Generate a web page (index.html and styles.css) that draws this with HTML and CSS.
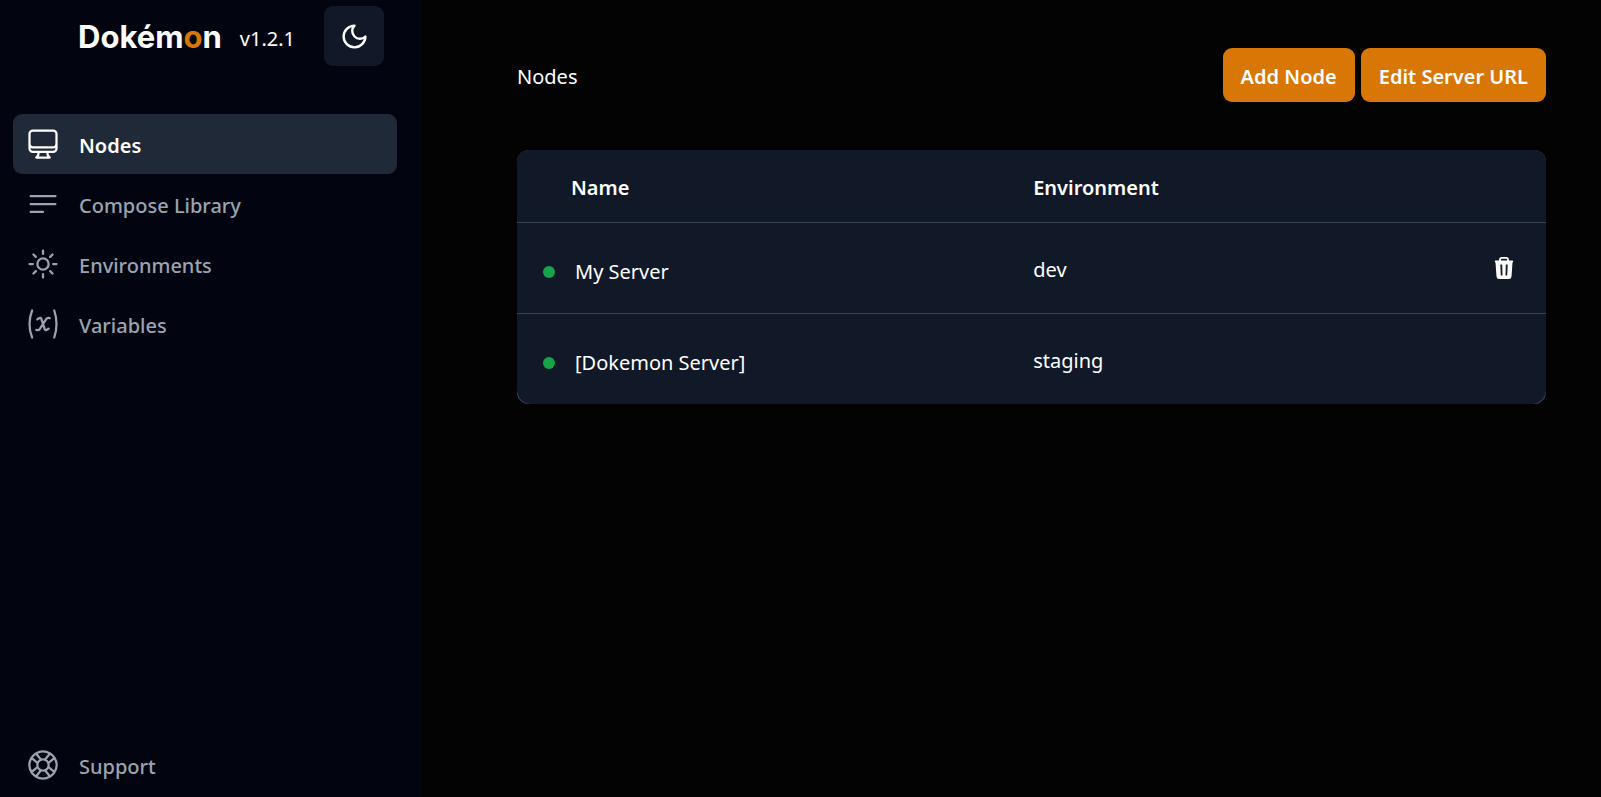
FILE: index.html
```html
<!DOCTYPE html>
<html lang="en">
<head>
<meta charset="utf-8">
<title>Dokémon – Nodes</title>
<link rel="stylesheet" href="styles.css">
</head>
<body>
<div class="app">
  <aside class="sidebar">
    <header class="brand">
      <span class="logo">Dokém<span class="logo-accent">o</span>n</span>
      <span class="version">v1.2.1</span>
      <button class="theme-toggle" type="button" aria-label="Toggle theme">
        <svg class="moon" viewBox="0 0 24 24"><path d="M12 3a6 6 0 0 0 9 9 9 9 0 1 1-9-9Z"/></svg>
      </button>
    </header>
    <nav class="nav">
      <a class="nav-link active" href="#nodes">
        <svg class="icon" viewBox="0 0 24 24"><path d="M9 17.25v1.007a3 3 0 0 1-.879 2.122L7.5 21h9l-.621-.621A3 3 0 0 1 15 18.257V17.25m6-12V15a2.25 2.25 0 0 1-2.25 2.25H5.25A2.25 2.25 0 0 1 3 15V5.25m18 0A2.25 2.25 0 0 0 18.75 3H5.25A2.25 2.25 0 0 0 3 5.25m18 0V12a2.25 2.25 0 0 1-2.25 2.25H5.25A2.25 2.25 0 0 1 3 12V5.25"/></svg>
        <span class="label">Nodes</span>
      </a>
      <a class="nav-link" href="#library">
        <svg class="icon" viewBox="0 0 24 24"><path d="M3.75 6.75h16.5M3.75 12h16.5m-16.5 5.25H12"/></svg>
        <span class="label">Compose Library</span>
      </a>
      <a class="nav-link" href="#environments">
        <svg class="icon" viewBox="0 0 24 24"><path d="M12 3v2.25m6.364.386-1.591 1.591M21 12h-2.25m-.386 6.364-1.591-1.591M12 18.75V21m-4.773-4.227-1.591 1.591M5.25 12H3m4.227-4.773L5.636 5.636M15.75 12a3.75 3.75 0 1 1-7.5 0 3.75 3.75 0 0 1 7.5 0Z"/></svg>
        <span class="label">Environments</span>
      </a>
      <a class="nav-link" href="#variables">
        <svg class="icon" viewBox="0 0 24 24"><path d="M4.745 3A23.933 23.933 0 0 0 3 12c0 3.183.62 6.22 1.745 9M19.5 3c.967 2.78 1.5 5.817 1.5 9s-.533 6.22-1.5 9M8.25 8.885l1.444-.89a.75.75 0 0 1 1.105.402l2.402 7.206a.75.75 0 0 0 1.104.401l1.445-.889m-8.25.75.213.09a1.687 1.687 0 0 0 2.062-.617l4.45-6.676a1.688 1.688 0 0 1 2.062-.618l.213.09"/></svg>
        <span class="label">Variables</span>
      </a>
      <a class="nav-link support" href="#support">
        <svg class="icon" viewBox="0 0 24 24"><path d="M16.712 4.33a9.027 9.027 0 0 1 1.652 1.306c.51.51.944 1.064 1.306 1.652M16.712 4.33l-3.448 4.138m3.448-4.138a9.014 9.014 0 0 0-9.424 0M19.67 7.288l-4.138 3.448m4.138-3.448a9.014 9.014 0 0 1 0 9.424m-4.138-5.976a3.736 3.736 0 0 0-.88-1.388 3.737 3.737 0 0 0-1.388-.88m2.268 2.268a3.765 3.765 0 0 1 0 2.528m-2.268-4.796a3.765 3.765 0 0 0-2.528 0m4.796 4.796c-.181.506-.475.982-.88 1.388a3.736 3.736 0 0 1-1.388.88m2.268-2.268 4.138 3.448m0 0a9.027 9.027 0 0 1-1.306 1.652c-.51.51-1.064.944-1.652 1.306m0 0-3.448-4.138m3.448 4.138a9.014 9.014 0 0 1-9.424 0m5.976-4.138a3.765 3.765 0 0 1-2.528 0m0 0a3.736 3.736 0 0 1-1.388-.88 3.737 3.737 0 0 1-.88-1.388m2.268 2.268L7.288 19.67m0 0a9.024 9.024 0 0 1-1.652-1.306 9.027 9.027 0 0 1-1.306-1.652m0 0 4.138-3.448M4.33 16.712a9.014 9.014 0 0 1 0-9.424m4.138 5.976a3.765 3.765 0 0 1 0-2.528m0 0c.181-.506.475-.982.88-1.388a3.736 3.736 0 0 1 1.388-.88m-2.268 2.268L4.33 7.288m6.406 1.18L7.288 4.33m0 0a9.024 9.024 0 0 0-1.652 1.306A9.025 9.025 0 0 0 4.33 7.288"/></svg>
        <span class="label">Support</span>
      </a>
    </nav>
  </aside>
  <main class="main">
    <div class="page-head">
      <h1 class="title">Nodes</h1>
      <div class="actions">
        <button class="btn" type="button">Add Node</button>
        <button class="btn" type="button">Edit Server URL</button>
      </div>
    </div>
    <div class="card">
      <table class="table">
        <colgroup><col class="col-name"><col class="col-env"><col></colgroup>
        <thead>
          <tr><th class="name-head" scope="col">Name</th><th scope="col">Environment</th><th></th></tr>
        </thead>
        <tbody>
          <tr>
            <td class="name"><span class="name-inner"><span class="dot"></span>My Server</span></td>
            <td>dev</td>
            <td class="row-actions">
              <button class="delete" type="button" aria-label="Delete My Server">
                <svg class="trash" viewBox="0 0 24 24"><path fill-rule="evenodd" d="M3.500 4.500H7V4q0-3 3-3h4q3 0 3 3v.5h3.500q.7 0 .7.800T20.500 6.500L19.500 20.500q-.2 2.500-2.500 2.500H7q-2.300 0-2.500-2.500L3.500 6.500q-.7-.2-.7-1.200t.7-.8ZM8.800 4.500h6.400V4q0-1.200-1.200-1.200h-4Q8.800 2.800 8.800 4ZM8.300 8.500l.5 11h1.700l-.3-11ZM15.700 8.500l-.5 11h-1.700l.3-11Z"/></svg>
              </button>
            </td>
          </tr>
          <tr>
            <td class="name"><span class="name-inner"><span class="dot"></span>[Dokemon Server]</span></td>
            <td>staging</td>
            <td></td>
          </tr>
        </tbody>
      </table>
    </div>
  </main>
</div>
</body>
</html>
```
FILE: styles.css
```css
* { box-sizing: border-box; }
body {
  margin: 0;
  background: #030303;
  color: #fff;
  font: 20px/30px "Noto Sans", "Open Sans", sans-serif;
}
button { font: inherit; color: inherit; border: 0; cursor: pointer; }
svg { display: block; }
.app { display: flex; min-height: 100vh; }
.sidebar {
  display: flex;
  flex-direction: column;
  flex: 0 0 421px;
  padding: 6px 24px 2px 13px;
  background: #02050f;
}
.brand { display: flex; align-items: center; height: 60px; padding: 0 13px 0 65px; }
.logo { padding-top: 2px; font: 700 31px/36px Inter, sans-serif; }
.logo-accent { color: #d97706; }
.version { margin-left: 18px; padding-top: 6px; }
.theme-toggle {
  display: grid;
  place-items: center;
  width: 60px;
  height: 60px;
  margin-left: auto;
  border-radius: 9px;
  background: #111827;
}
.moon { width: 29px; height: 29px; fill: none; stroke: #fff; stroke-width: 2; stroke-linecap: round; stroke-linejoin: round; }
.nav { display: flex; flex: 1; flex-direction: column; margin-top: 48px; }
.nav-link {
  display: flex;
  align-items: center;
  gap: 18px;
  height: 60px;
  padding: 0 12px;
  border-radius: 9px;
  color: #9ca3af;
  font-weight: 500;
  text-decoration: none;
}
.label { padding-top: 4px; }
.nav-link.active { background: #1f2937; color: #fff; font-weight: 600; }
.support { margin-top: auto; }
.icon { width: 36px; height: 36px; fill: none; stroke: currentColor; stroke-width: 1.5; stroke-linecap: round; stroke-linejoin: round; }
.main { flex: 1; padding: 48px 55px 48px 96px; }
.page-head { display: flex; align-items: center; justify-content: space-between; }
.title { margin: 0; padding-top: 4px; font-size: 20px; font-weight: 400; }
.actions { display: flex; gap: 6px; }
.btn { height: 54px; padding: 4px 18px 0; border-radius: 9px; background: #d97706; font-weight: 600; }
.card { margin-top: 48px; overflow: hidden; border-radius: 12px; background: #4b5563; }
.table { width: 100%; border-collapse: collapse; table-layout: fixed; border-radius: 0 0 14px 14px; background: #111827; }
.col-name { width: 49%; }
.col-env { width: 41%; }
.table th { height: 72px; padding: 4px 12px 0; text-align: left; font-weight: 600; }
.table td { height: 91px; padding: 4px 12px 0; border-top: 1px solid #374151; }
.table .name-head { padding-left: 54px; }
.table .name { padding: 8px 0 0 26px; }
.name-inner { display: flex; align-items: center; gap: 20px; }
.dot { width: 12px; height: 12px; border-radius: 50%; background: #16a34a; }
.table .row-actions { padding: 0 30px 0 0; }
.delete { display: block; margin-left: auto; padding: 0; background: none; }
.trash { width: 24px; height: 24px; fill: #fff; }
```
